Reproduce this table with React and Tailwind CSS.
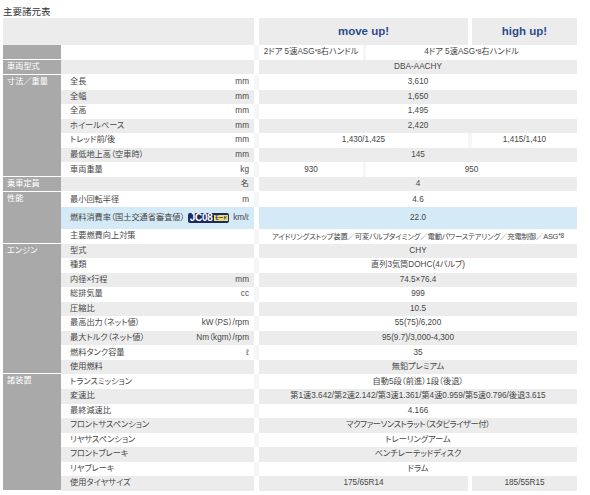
import React from 'react';

// cell colours per row tone
const cellBg = { gray: 'bg-[#ececec]', white: 'bg-white', blue: 'bg-[#d4eaf6]' };
// colour that shows through the gaps between cells
const gapBg = { gray: 'bg-white', white: 'bg-[#f6f6f6]', blue: 'bg-white' };
// value column spans: a = 2door move up, b = 4door move up, c = high up
const spanW = {
  full: 'w-[318px]',
  ab: 'w-[209px]',
  c: 'w-[105px]',
  a: 'w-[104px]',
  bc: 'w-[211px]',
};

const Asg = () => (
  <>
    ASG<span className="align-super text-[6.5px] leading-none">*8</span>
  </>
);

const Jc08 = () => (
  <span className="inline-flex items-center h-[10px] rounded-[2px] bg-[#1c2a63] pl-[2px] pr-[1px] mr-[4px]">
    <span className="text-white font-bold text-[10px] leading-none tracking-tight">JC08</span>
    <span className="ml-[1px] bg-[#e9df73] text-[#1c2a63] text-[4.5px] leading-none p-[1px] font-bold">モード</span>
  </span>
);

const groups = [
  {
    label: '',
    rows: [
      {
        vals: [
          ['a', <>2ドア 5速<Asg /> 右ハンドル</>],
          ['bc', <>4ドア 5速<Asg /> 右ハンドル</>],
        ],
      },
    ],
  },
  { label: '車両型式', rows: [{ vals: [['full', 'DBA-AACHY']] }] },
  {
    label: '寸法／重量',
    rows: [
      { name: '全長', unit: 'mm', vals: [['full', '3,610']] },
      { name: '全幅', unit: 'mm', vals: [['full', '1,650']] },
      { name: '全高', unit: 'mm', vals: [['full', '1,495']] },
      { name: 'ホイールベース', unit: 'mm', vals: [['full', '2,420']] },
      { name: 'トレッド前/後', unit: 'mm', vals: [['ab', '1,430/1,425'], ['c', '1,415/1,410']] },
      { name: '最低地上高（空車時）', unit: 'mm', vals: [['full', '145']] },
      { name: '車両重量', unit: 'kg', vals: [['a', '930'], ['bc', '950']] },
    ],
  },
  { label: '乗車定員', rows: [{ unit: '名', vals: [['full', '4']] }] },
  {
    label: '性能',
    rows: [
      { name: '最小回転半径', unit: 'm', vals: [['full', '4.6']] },
      {
        name: '燃料消費率（国土交通省審査値）',
        unit: <><Jc08 />km/ℓ</>,
        vals: [['full', '22.0']],
        tall: true,
      },
      {
        name: '主要燃費向上対策',
        tight: 'text-[7.4px] tracking-[-0.2px]',
        vals: [['full', <>アイドリングストップ装置／可変バルブタイミング／電動パワーステアリング／充電制御／<Asg /></>]],
      },
    ],
  },
  {
    label: 'エンジン',
    rows: [
      { name: '型式', vals: [['full', 'CHY']] },
      { name: '種類', vals: [['full', '直列3気筒DOHC(4バルブ)']] },
      { name: '内径×行程', unit: 'mm', vals: [['full', '74.5×76.4']] },
      { name: '総排気量', unit: 'cc', vals: [['full', '999']] },
      { name: '圧縮比', vals: [['full', '10.5']] },
      { name: '最高出力（ネット値）', unit: 'kW（PS）/rpm', vals: [['full', '55(75)/6,200']] },
      { name: '最大トルク（ネット値）', unit: 'Nm（kgm）/rpm', vals: [['full', '95(9.7)/3,000-4,300']] },
      { name: '燃料タンク容量', unit: 'ℓ', vals: [['full', '35']] },
      { name: '使用燃料', vals: [['full', '無鉛プレミアム']] },
    ],
  },
  {
    label: '諸装置',
    rows: [
      { name: 'トランスミッション', vals: [['full', '自動5段（前進）1段（後退）']] },
      {
        name: '変速比',
        vals: [['full', '第1速3.642/第2速2.142/第3速1.361/第4速0.959/第5速0.796/後退3.615']],
      },
      { name: '最終減速比', vals: [['full', '4.166']] },
      {
        name: 'フロントサスペンション',
        tight: 'tracking-[-0.4px]',
        vals: [['full', 'マクファーソンストラット（スタビライザー付）']],
      },
      { name: 'リヤサスペンション', vals: [['full', 'トレーリングアーム']] },
      { name: 'フロントブレーキ', vals: [['full', 'ベンチレーテッドディスク']] },
      { name: 'リヤブレーキ', vals: [['full', 'ドラム']] },
      { name: '使用タイヤサイズ', vals: [['ab', '175/65R14'], ['c', '185/55R15']] },
    ],
  },
];

const SpecRow = ({ row, tone }) => (
  <div className={`flex ${row.tall ? 'h-[22px]' : 'h-[14.55px]'} ${gapBg[tone]}`}>
    <div className={`w-[193px] flex items-center justify-between pl-[9px] pr-[5px] whitespace-nowrap ${cellBg[tone]}`}>
      <span>{row.name}</span>
      <span className="flex items-center">{row.unit}</span>
    </div>
    <div className="ml-[5px] w-[318px] flex justify-between">
      {row.vals.map(([span, text], i) => (
        <div
          key={i}
          className={`${spanW[span]} ${cellBg[tone]} ${row.tight || ''} flex items-center justify-center whitespace-nowrap`}
        >
          {text}
        </div>
      ))}
    </div>
  </div>
);

export default function App() {
  let rowIndex = 0;

  return (
    <div className="w-[590px] h-[495px] bg-white pl-[3px] text-[#474747] text-[8.2px] font-['Liberation_Sans','Noto_Sans_CJK_JP',sans-serif] [font-feature-settings:'palt'] overflow-hidden">
      {/* Title */}
      <div className="h-[18px] pt-[7px] text-[9.5px] leading-none text-[#333]">主要諸元表</div>

      {/* Grade header */}
      <div className="flex h-[27px]">
        <div className="w-[251px] bg-[#ececec]" />
        <div className="ml-[5px] w-[209px] bg-[#ececec] flex items-center justify-center font-bold text-[11.5px] text-[#2c4d8e]">
          move up!
        </div>
        <div className="ml-[4px] w-[105px] bg-[#ececec] flex items-center justify-center font-bold text-[11.5px] text-[#2c4d8e]">
          high up!
        </div>
      </div>

      {/* Spec groups */}
      {groups.map((group, gi) => (
        <div key={gi} className="flex">
          <div className="w-[58px] bg-[#a9a9a9] text-white border-b border-white pl-[4px] leading-[14.55px] whitespace-nowrap">
            {group.label}
          </div>
          <div className="flex flex-col">
            {group.rows.map((row, ri) => {
              const tone = row.tall ? 'blue' : rowIndex % 2 === 0 ? 'white' : 'gray';
              rowIndex += 1;
              return <SpecRow key={ri} row={row} tone={tone} />;
            })}
          </div>
        </div>
      ))}
    </div>
  );
}
